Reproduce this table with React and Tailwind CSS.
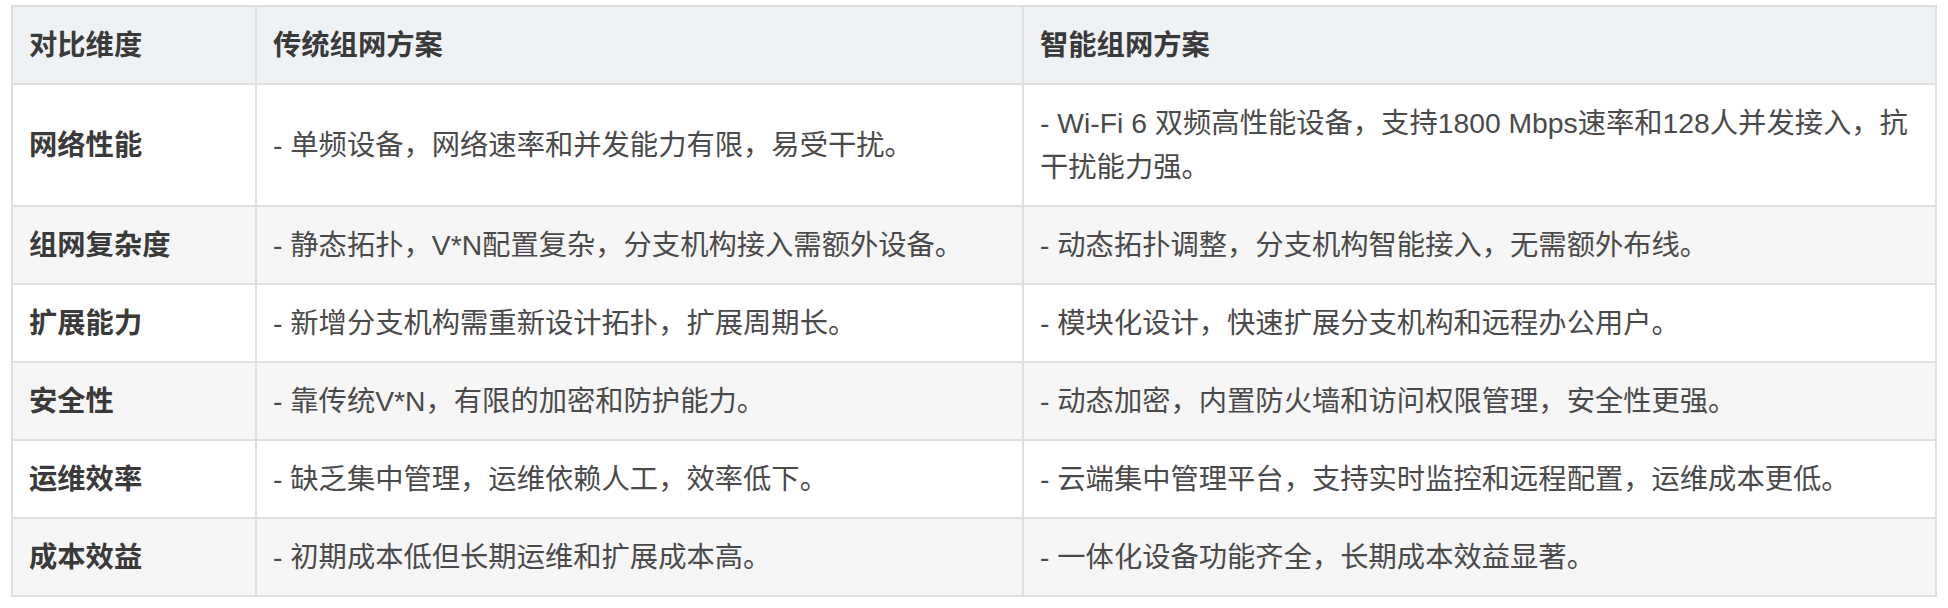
import React from "react";

const rows = [
  ["网络性能", "- 单频设备，网络速率和并发能力有限，易受干扰。", ["- Wi-Fi 6 双频高性能设备，支持1800 Mbps速率和128人并发接入，抗", "干扰能力强。"]],
  ["组网复杂度", "- 静态拓扑，V*N配置复杂，分支机构接入需额外设备。", ["- 动态拓扑调整，分支机构智能接入，无需额外布线。"]],
  ["扩展能力", "- 新增分支机构需重新设计拓扑，扩展周期长。", ["- 模块化设计，快速扩展分支机构和远程办公用户。"]],
  ["安全性", "- 靠传统V*N，有限的加密和防护能力。", ["- 动态加密，内置防火墙和访问权限管理，安全性更强。"]],
  ["运维效率", "- 缺乏集中管理，运维依赖人工，效率低下。", ["- 云端集中管理平台，支持实时监控和远程配置，运维成本更低。"]],
  ["成本效益", "- 初期成本低但长期运维和扩展成本高。", ["- 一体化设备功能齐全，长期成本效益显著。"]],
];

export default function App() {
  return (
    <div
      className="w-[1948px] h-[608px] bg-white pt-[5px] pl-[11px]"
      style={{ fontFamily: '"Liberation Sans", "Noto Sans CJK SC", sans-serif' }}
    >
      <table className="w-[1924px] border-collapse border-2 border-[#dfdfdf] text-[28.3px] leading-[44px] text-[#4a4a4a] table-fixed">
        <colgroup>
          <col className="w-[244px]" />
          <col className="w-[767px]" />
          <col className="w-[913px]" />
        </colgroup>
        <thead>
          <tr className="bg-[#eff2f5]">
            <th className="border-2 border-[#dfdfdf] px-4 py-4 text-left font-semibold text-[#3a3a3a]">对比维度</th>
            <th className="border-2 border-[#dfdfdf] px-4 py-4 text-left font-semibold text-[#3a3a3a]">传统组网方案</th>
            <th className="border-2 border-[#dfdfdf] px-4 py-4 text-left font-semibold text-[#3a3a3a]">智能组网方案</th>
          </tr>
        </thead>
        <tbody>
          {rows.map((r, i) => (
            <tr key={i} className={i % 2 === 1 ? "bg-[#f6f6f6]" : "bg-white"}>
              <td className="border-2 border-[#dfdfdf] px-4 py-4 align-middle font-bold text-[#3a3a3a]">{r[0]}</td>
              <td className="border-2 border-[#dfdfdf] px-4 py-4 align-middle">{r[1]}</td>
              <td className="border-2 border-[#dfdfdf] px-4 py-4 align-middle">
                {r[2].map((line, j) => (
                  <React.Fragment key={j}>
                    {j > 0 && <br />}
                    {line}
                  </React.Fragment>
                ))}
              </td>
            </tr>
          ))}
        </tbody>
      </table>
    </div>
  );
}
